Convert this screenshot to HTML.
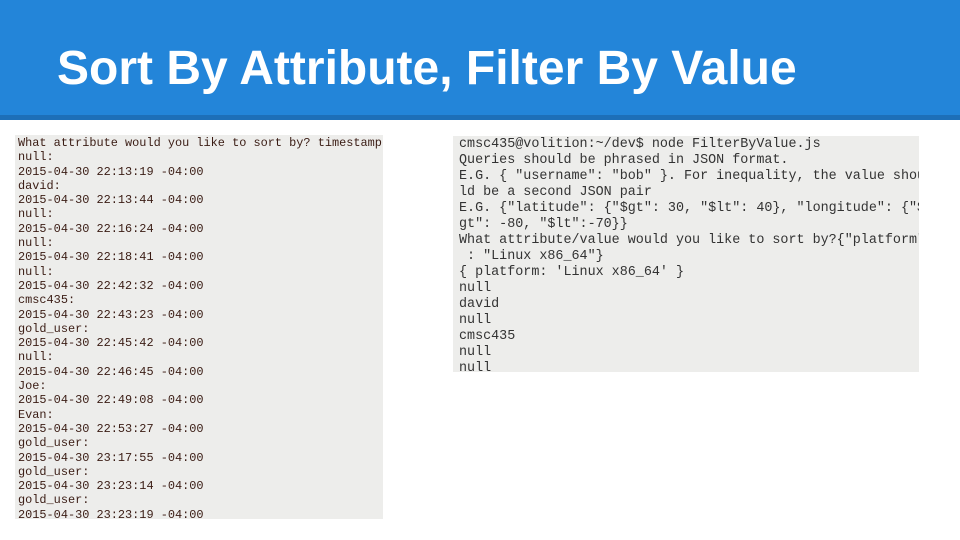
<!DOCTYPE html>
<html><head><style>
body{margin:0;width:960px;height:540px;background:#fff;position:relative;overflow:hidden}
.hdr{position:absolute;left:0;top:0;width:960px;height:115px;background:#2385d9;border-bottom:5px solid #1d6fb8}
.hdr h1{position:absolute;left:57px;top:45px;margin:0;font:bold 48px/1 "Liberation Sans",sans-serif;color:#fff;white-space:nowrap}
.p{position:absolute;background:#ededeb;font-family:"Liberation Mono","DejaVu Sans Mono",monospace;white-space:pre;margin:0;overflow:hidden}
.l{left:15px;top:135px;width:368px;height:384px;font-size:11.9px;line-height:14.3px;color:#3a1c14;padding:1px 0 0 3px;box-sizing:border-box}
.r{left:453px;top:136px;width:466px;height:236px;font-size:13.4px;line-height:16px;color:#333;padding:1px 0 0 6px;box-sizing:border-box}
</style></head><body>
<div class="hdr"><h1>Sort By Attribute, Filter By Value</h1></div>
<pre class="p l">What attribute would you like to sort by? timestamp
null:
2015-04-30 22:13:19 -04:00
david:
2015-04-30 22:13:44 -04:00
null:
2015-04-30 22:16:24 -04:00
null:
2015-04-30 22:18:41 -04:00
null:
2015-04-30 22:42:32 -04:00
cmsc435:
2015-04-30 22:43:23 -04:00
gold_user:
2015-04-30 22:45:42 -04:00
null:
2015-04-30 22:46:45 -04:00
Joe:
2015-04-30 22:49:08 -04:00
Evan:
2015-04-30 22:53:27 -04:00
gold_user:
2015-04-30 23:17:55 -04:00
gold_user:
2015-04-30 23:23:14 -04:00
gold_user:
2015-04-30 23:23:19 -04:00</pre>
<pre class="p r">cmsc435@volition:~/dev$ node FilterByValue.js
Queries should be phrased in JSON format.
E.G. { "username": "bob" }. For inequality, the value shou
ld be a second JSON pair
E.G. {"latitude": {"$gt": 30, "$lt": 40}, "longitude": {"$
gt": -80, "$lt":-70}}
What attribute/value would you like to sort by?{"platform"
 : "Linux x86_64"}
{ platform: 'Linux x86_64' }
null
david
null
cmsc435
null
null</pre>
</body></html>
